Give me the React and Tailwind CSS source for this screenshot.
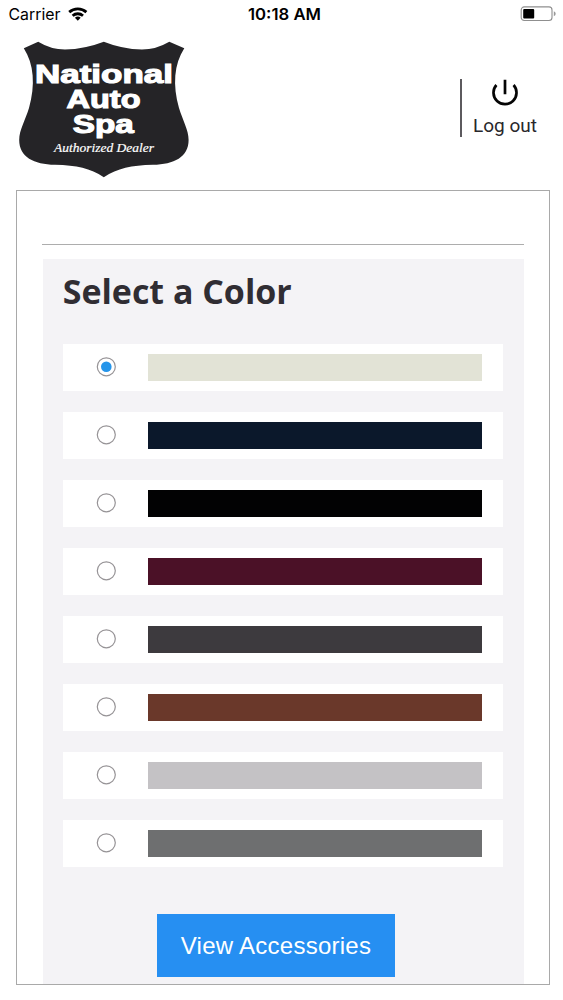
import { useState } from 'react'

const COLORS = [
  { id: 'ivory', swatch: 'bg-[#e2e3d6]' },
  { id: 'navy', swatch: 'bg-[#0b182b]' },
  { id: 'black', swatch: 'bg-[#020203]' },
  { id: 'burgundy', swatch: 'bg-[#4b1127]' },
  { id: 'charcoal', swatch: 'bg-[#3d3a3e]' },
  { id: 'brown', swatch: 'bg-[#6a382a]' },
  { id: 'silver', swatch: 'bg-[#c4c2c5]' },
  { id: 'gray', swatch: 'bg-[#6e6f70]' },
]

export default function App() {
  const [selected, setSelected] = useState('ivory')

  return (
    <div className="flex h-[1000px] w-[563px] flex-col overflow-hidden bg-white">
      <StatusBar />
      <Header />

      <main className="ml-4 flex h-[795px] w-[534px] flex-col border border-[#a9a9a9] px-[25px] pt-[53px]">
        <div className="h-px w-[481.5px] shrink-0 bg-[#adadad]" />

        <section className="mt-3.5 ml-[0.5px] flex min-h-0 w-[481.5px] flex-1 flex-col bg-[#f4f3f6] px-[20.5px]">
          <h1 className="mt-[9px] h-[49px] font-['Open_Sans','Noto_Sans',sans-serif] text-[34px] leading-[49px] font-bold whitespace-nowrap text-[#302d33]">
            <svg className="block overflow-visible" width="240" height="49">
              <text x="-0.3" y="36" textLength="229" lengthAdjust="spacingAndGlyphs" fill="currentColor">
                Select a Color
              </text>
            </svg>
          </h1>

          <div className="mt-[27px] flex flex-col gap-[21px]">
            {COLORS.map(c => (
              <ColorRow
                key={c.id}
                color={c}
                checked={selected === c.id}
                onSelect={() => setSelected(c.id)}
              />
            ))}
          </div>

          <button className="mt-[47px] ml-[94px] flex h-[63px] w-[238px] shrink-0 items-center justify-center bg-[#268ff2] font-['Liberation_Sans',Arial,sans-serif] text-[24px] tracking-[0.26px] whitespace-nowrap text-white">
            View Accessories
          </button>
        </section>
      </main>
    </div>
  )
}

function ColorRow({ color, checked, onSelect }) {
  return (
    <button
      role="radio"
      aria-checked={checked}
      onClick={onSelect}
      className="flex h-[47px] w-[440px] items-center bg-white"
    >
      <svg className="mb-[2px] ml-[33px] shrink-0" width="20" height="20" fill="none">
        <circle cx="10.3" cy="9.8" r="9" stroke="#969396" strokeWidth="1.2" />
        {checked && <circle cx="10.3" cy="9.8" r="5.3" fill="#2595ea" />}
      </svg>
      <span className={`ml-[32px] h-[27px] w-[334px] ${color.swatch}`} />
    </button>
  )
}

function StatusBar() {
  return (
    <div className="flex h-[30px] shrink-0 justify-between pr-[7px] pl-2 font-[Inter,sans-serif] text-black">
      <div className="flex w-[90px]">
        <svg width="82" height="30">
          <text x="0.5" y="20.3" fontSize="16" textLength="52" lengthAdjust="spacingAndGlyphs">Carrier</text>
          <g fill="none" stroke="#000" strokeWidth="2.8">
            <path d="M61.2 12.1a12.8 12.8 0 0 1 17.2 0" />
            <path d="M64.6 15.7a7.9 7.9 0 0 1 10.4 0" />
          </g>
          <path d="M66.9 17.7a4.3 4.3 0 0 1 5.8 0L69.8 20.8Z" />
        </svg>
      </div>
      <svg width="90" height="30">
        <text x="4" y="20.3" fontSize="16" fontWeight="600" textLength="73" lengthAdjust="spacingAndGlyphs">10:18 AM</text>
      </svg>
      <div className="flex w-[76px] justify-end">
        <svg width="36" height="30">
          <rect x="1.2" y="6.9" width="30.8" height="13.6" rx="3" fill="none" stroke="#8f8f8f" strokeWidth="1.1" />
          <rect x="3.2" y="8.9" width="11" height="9.6" rx="1" />
          <path d="M33.8 11.2q1.9 .8 1.9 2.5t-1.9 2.5Z" fill="#999" />
        </svg>
      </div>
    </div>
  )
}

function Header() {
  return (
    <header className="flex h-[160px] shrink-0 items-start justify-between pr-[25px] pl-[18px]">
      <Logo />
      <div className="mt-[49px] flex h-[58px] w-[78px] items-start border-l-2 border-[#5c5a5e]">
        <button className="ml-[11px] flex w-[66px] flex-col items-start text-[#29272b]">
          <svg className="ml-[18px]" width="28" height="28" viewBox="0 0 28 28" fill="none" stroke="#050505" strokeWidth="2.7">
            <path d="M5.4 6a11.5 11.5 0 1 0 17.2 0M14 .8v14.4" />
          </svg>
          <svg width="66" height="32" className="font-[Roboto,sans-serif]">
            <text x="0" y="24.5" fontSize="19" textLength="64" lengthAdjust="spacingAndGlyphs" fill="currentColor">Log out</text>
          </svg>
        </button>
      </div>
    </header>
  )
}

function Logo() {
  return (
    <svg width="172" height="149" viewBox="18 30 172 149">
      <path
        fill="#252427"
        d="M23.8 48.2 38.2 41.7Q51 49.5 65 49.5 85 49 103.8 41.7 122 49 142 49.5 156 49.5 169.3 41.7L184.3 48.2C174 64 172.5 85 179 108 183 121 188.6 130 188.6 140 188.6 157 174 164.5 153 164.8 131 165.5 118 168 103.8 177.3 90 168 77 165.5 55 164.8 34 164.5 19.2 157 19.2 140 19.2 130 25 121 29 108 35.5 85 34 64 23.8 48.2Z"
      />
      {/* Stroke thickens the bold face to the heavy sign lettering */}
      <g
        fill="#fff"
        stroke="#fff"
        strokeWidth="1.1"
        fontFamily="'Liberation Sans', Arial, sans-serif"
        fontWeight="700"
        fontSize="25"
      >
        <text x="35" y="83.4" textLength="138" lengthAdjust="spacingAndGlyphs">National</text>
        <text x="66.5" y="108.4" textLength="74" lengthAdjust="spacingAndGlyphs">Auto</text>
        <text x="72.8" y="133.2" textLength="61" lengthAdjust="spacingAndGlyphs">Spa</text>
      </g>
      <text
        x="54"
        y="152"
        fill="#fff"
        stroke="#fff"
        strokeWidth=".2"
        fontFamily="'Brush Script MT', 'Liberation Serif', serif"
        fontStyle="italic"
        fontSize="12.5"
        textLength="100"
        lengthAdjust="spacingAndGlyphs"
      >
        Authorized Dealer
      </text>
    </svg>
  )
}
